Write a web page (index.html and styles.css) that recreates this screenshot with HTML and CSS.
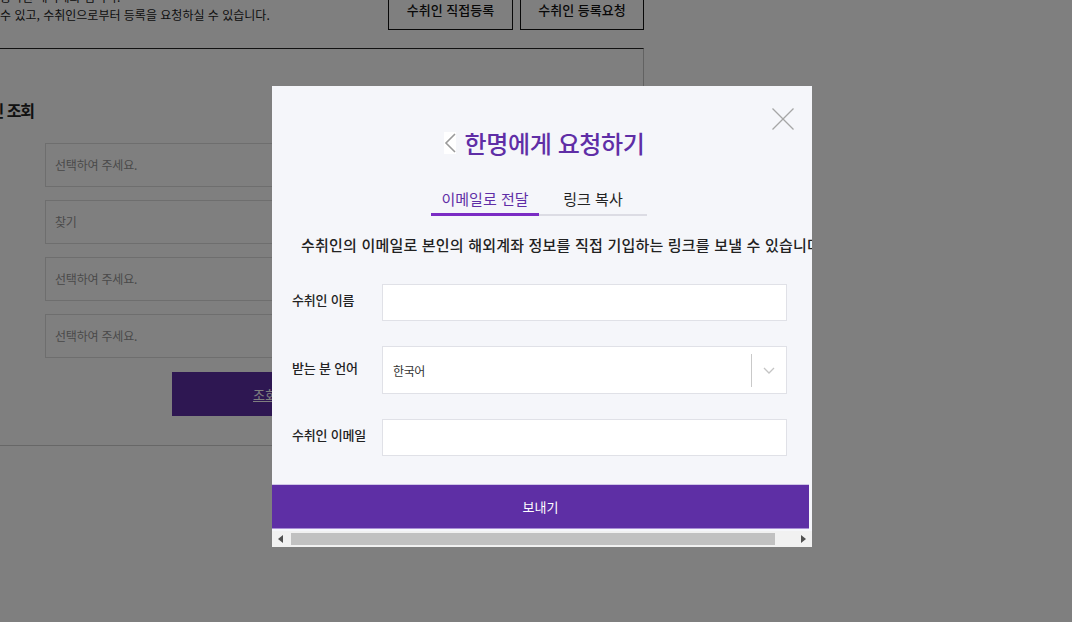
FILE: index.html
```html
<!DOCTYPE html>
<html lang="ko">
    <head>
        <meta charset="UTF-8">
        <title>수취인 등록요청</title>
        <meta name="viewport" content="width=device-width, initial-scale=1.0">
        <link rel="stylesheet" href="styles.css">
    </head>
    <body>
        <div class="page">
            <div class="intro">
                <p class="intro-text">등록된 해외계좌 입니다.<br>수 있고, 수취인으로부터 등록을 요청하실 수 있습니다.</p>
                <div class="intro-btns">
                    <button class="line-btn">수취인 직접등록</button>
                    <button class="line-btn">수취인 등록요청</button>
                </div>
            </div>
            <div class="search">
                <h2 class="search-title">수취인 조회</h2>
                <div class="search-fields">
                    <div class="field">선택하여 주세요.</div>
                    <div class="field">찾기</div>
                    <div class="field">선택하여 주세요.</div>
                    <div class="field">선택하여 주세요.</div>
                    <button class="search-btn">조회</button>
                </div>
            </div>
        </div>

        <div class="dim"></div>

        <div class="modal">
            <div class="modal-body">
                <button class="modal-close" aria-label="닫기">
                    <svg width="22" height="22" viewBox="0 0 22 22">
                        <line x1="0.5" y1="0.5" x2="21.5" y2="21.5"/>
                        <line x1="21.5" y1="0.5" x2="0.5" y2="21.5"/>
                    </svg>
                </button>
                <div class="modal-head">
                    <svg class="back" width="12" height="22" viewBox="0 0 12 22">
                        <polyline points="11,2 2,11 11,20"/>
                    </svg>
                    <h1 class="modal-title">한명에게 요청하기</h1>
                </div>
                <div class="tabs">
                    <span class="tab active">이메일로 전달</span>
                    <span class="tab">링크 복사</span>
                </div>
                <p class="desc">수취인의 이메일로 본인의 해외계좌 정보를 직접 기입하는 링크를 보낼 수 있습니다</p>

                <div class="form-row">
                    <label class="form-label">수취인 이름</label>
                    <input class="input" type="text">
                </div>
                <div class="form-row">
                    <label class="form-label">받는 분 언어</label>
                    <div class="select">
                        <span class="select-value">한국어</span>
                        <span class="select-bar"></span>
                        <span class="select-arrow">
                            <svg width="12" height="7" viewBox="0 0 12 7">
                                <polyline points="1,1 6,6 11,1"/>
                            </svg>
                        </span>
                    </div>
                </div>
                <div class="form-row">
                    <label class="form-label">수취인 이메일</label>
                    <input class="input" type="text">
                </div>
                <button class="send-btn">보내기</button>
            </div>
            <div class="hscroll">
                <span class="hscroll-arrow">
                    <svg width="5" height="8" viewBox="0 0 5 8"><polygon points="5,0 0,4 5,8"/></svg>
                </span>
                <span class="hscroll-track"><span class="hscroll-thumb"></span></span>
                <span class="hscroll-arrow">
                    <svg width="5" height="8" viewBox="0 0 5 8"><polygon points="0,0 5,4 0,8"/></svg>
                </span>
            </div>
        </div>
    </body>
</html>
```

FILE: styles.css
```css
body {
    margin: 0;
    padding: 0;
    overflow: hidden;
    background-color: #fff;
    color: #222;
    font-family: "Noto Sans CJK KR", "Noto Sans", sans-serif;
}
button {
    font-family: inherit;
}

/* page behind the popup */
.page {
    width: 644px;
    margin-top: -11px;
}
.intro {
    display: flex;
    justify-content: space-between;
    align-items: flex-start;
    height: 59px;
}
.intro-text {
    margin: -1px 0 0 0;
    font-size: 12px;
    line-height: 18px;
}
.intro-btns {
    display: flex;
    gap: 7px;
}
.line-btn {
    width: 125px;
    height: 41px;
    padding: 0;
    border: 1px solid #111;
    background: #fff;
    color: #111;
    font-size: 13px;
    font-weight: 500;
}
.line-btn + .line-btn {
    width: 124px;
}
.search {
    border-top: 1px solid #222;
    border-right: 1px solid #c4c4c4;
    border-bottom: 1px solid #cfcfcf;
    padding: 49px 0 29px 0;
}
.search-title {
    margin: 0 0 21px -38px;
    font-size: 16px;
    line-height: 24px;
    font-weight: 700;
    letter-spacing: -1px;
}
.search-fields {
    display: flex;
    flex-direction: column;
    gap: 13px;
    padding-left: 45px;
}
.field {
    width: 555px;
    height: 42px;
    padding-left: 9px;
    border: 1px solid #dcdcdc;
    color: #949494;
    font-size: 12px;
    line-height: 42px;
    letter-spacing: -0.2px;
}
.search-btn {
    width: 186px;
    height: 44px;
    margin: 1px 0 0 127px;
    border: none;
    background-color: #5d2ea5;
    color: #fff;
    font-size: 13px;
    text-decoration: underline;
}

.dim {
    position: fixed;
    inset: 0;
    background: rgba(0, 0, 0, 0.5);
}

/* popup */
.modal {
    position: fixed;
    left: 272px;
    top: 86px;
    width: 540px;
    height: 461px;
    display: flex;
    flex-direction: column;
    background-color: #f5f6fa;
    overflow: hidden;
}
.modal-body {
    position: relative;
    flex: 1;
}
.modal-close {
    position: absolute;
    left: 500px;
    top: 22px;
    width: 22px;
    height: 22px;
    padding: 0;
    border: none;
    background: none;
}
.modal-close svg {
    display: block;
    stroke: #a6a6a6;
    stroke-width: 1.2;
}
.modal-head {
    display: flex;
    justify-content: center;
    align-items: center;
    gap: 9px;
    height: 32px;
    padding: 41px 0 1px 4px;
}
.back {
    background: #fff;
    fill: none;
    stroke: #9a9a9a;
    stroke-width: 1.6;
}
.modal-title {
    margin: 0;
    color: #5f2ea6;
    font-size: 24px;
    line-height: 32px;
    font-weight: 500;
    letter-spacing: -0.4px;
}
.tabs {
    display: flex;
    justify-content: center;
    margin-top: 29px;
    padding-right: 6px;
}
.tab {
    width: 108px;
    padding-bottom: 5px;
    border-bottom: 2px solid #dcdce4;
    font-size: 15px;
    line-height: 20px;
    text-align: center;
}
.tab.active {
    padding-bottom: 4px;
    border-bottom: 3px solid #7b2cc4;
    color: #5f2ea6;
}
.desc {
    margin: 19px 0 0 0;
    padding-left: 29px;
    white-space: nowrap;
    font-size: 15px;
    line-height: 20px;
    font-weight: 500;
    letter-spacing: 0.2px;
}
.form-row {
    display: flex;
    align-items: center;
    margin-top: 25px;
    padding-left: 20px;
}
.desc + .form-row {
    margin-top: 29px;
}
.form-label {
    width: 90px;
    padding-bottom: 6px;
    font-size: 13px;
    font-weight: 500;
    letter-spacing: -0.2px;
}
.input {
    box-sizing: border-box;
    width: 405px;
    height: 37px;
    margin: 0;
    border: 1px solid #e0e1e7;
    background: #fff;
    outline: none;
}
.select {
    box-sizing: border-box;
    display: flex;
    align-items: center;
    width: 405px;
    height: 48px;
    border: 1px solid #e0e1e7;
    background: #fff;
}
.select-value {
    flex: 1;
    padding-left: 10px;
    font-size: 12px;
    letter-spacing: -0.4px;
    color: #333;
}
.select-bar {
    width: 1px;
    height: 33px;
    background-color: #c9c9c9;
}
.select-arrow {
    display: flex;
    justify-content: center;
    width: 34px;
}
.select-arrow svg {
    fill: none;
    stroke: #c4c4c4;
    stroke-width: 1.3;
}
.send-btn {
    display: block;
    width: 537px;
    height: 45px;
    margin-top: 28px;
    border: none;
    border-top: 1px solid #cfc6e6;
    border-bottom: 1px solid #a98fd6;
    background-color: #5e2fa5;
    color: #fff;
    font-size: 13px;
    padding-bottom: 2px;
}

/* fake horizontal scrollbar of the popup */
.hscroll {
    display: flex;
    height: 16px;
    background-color: #f1f1f1;
}
.hscroll-arrow {
    display: flex;
    align-items: center;
    justify-content: center;
    width: 17px;
}
.hscroll-arrow svg {
    fill: #505050;
}
.hscroll-track {
    flex: 1;
    display: flex;
    align-items: center;
    padding-left: 2px;
}
.hscroll-thumb {
    width: 484px;
    height: 12px;
    background-color: #c1c1c1;
}
```
